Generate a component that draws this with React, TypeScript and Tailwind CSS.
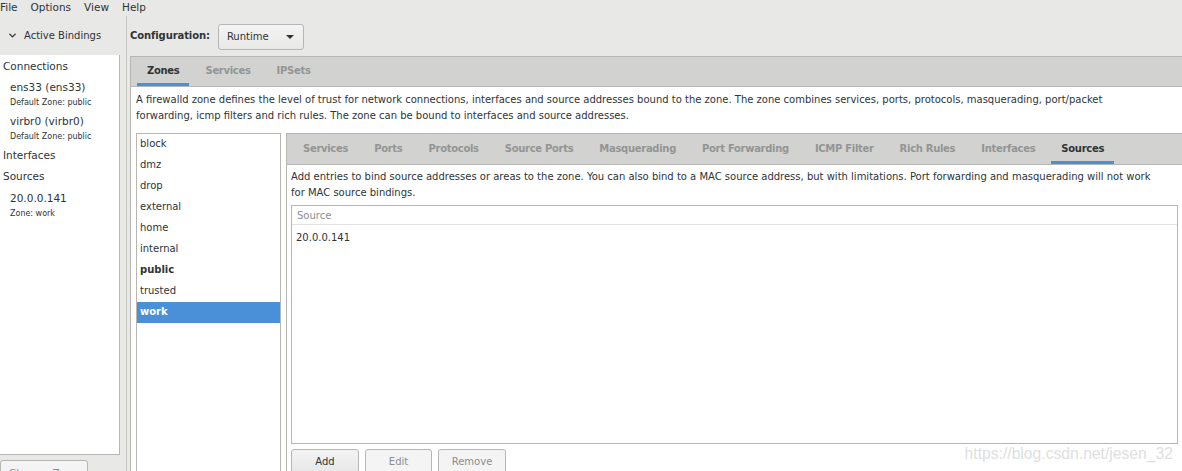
import { ChevronDown } from "lucide-react";

const zones = ["block", "dmz", "drop", "external", "home", "internal", "public", "trusted", "work"];
const zoneTabs = [
  "Services",
  "Ports",
  "Protocols",
  "Source Ports",
  "Masquerading",
  "Port Forwarding",
  "ICMP Filter",
  "Rich Rules",
  "Interfaces",
  "Sources",
];

function Tab({ label, active }: { label: string; active?: boolean }) {
  return (
    <div
      className={
        "flex h-full items-center border-b-[3px] px-[10px] pt-[2px] font-bold tracking-[-0.3px] " +
        (active ? "border-[#4a90d9] text-[#2e3436]" : "border-transparent text-[#929595]")
      }
    >
      {label}
    </div>
  );
}

function Button({ label, disabled, w }: { label: string; disabled?: boolean; w: string }) {
  return (
    <div
      className={
        "flex h-[26px] shrink-0 items-center justify-center rounded-[3px] border border-[#b6b6b3] " +
        w +
        " " +
        (disabled ? "bg-[#f4f4f4] text-[#8b8e8f]" : "bg-gradient-to-b from-[#f4f4f4] to-[#e6e6e6] text-[#2e3436]")
      }
    >
      {label}
    </div>
  );
}

function Binding({ name, zone, pt }: { name: string; zone: string; pt: string }) {
  return (
    <div className={"pl-[10px] " + pt}>
      <div className="leading-[14px]">{name}</div>
      <div className="pt-[2px] text-[8px] leading-[14px]">{zone}</div>
    </div>
  );
}

export default function App() {
  return (
    <div className="relative flex h-[471px] w-[1182px] flex-col overflow-hidden bg-[#e8e8e7] font-['DejaVu_Sans',sans-serif] text-[10px] leading-[16px] text-[#2e3436]">
      {/* menu bar */}
      <div className="flex h-[16px] shrink-0 items-center gap-[13px] pb-[2px] text-[10.5px]">
        <span>File</span>
        <span>Options</span>
        <span>View</span>
        <span>Help</span>
      </div>

      <div className="flex min-h-0 flex-1">
        {/* active bindings sidebar */}
        <div className="flex w-[120px] shrink-0 flex-col">
          <div className="flex h-[39px] shrink-0 items-center gap-[6px] pl-[7px] text-[10px] text-[#2e3436]">
            <ChevronDown size={11} strokeWidth={3} />
            <span>Active Bindings</span>
          </div>
          <div className="flex h-[400px] shrink-0 flex-col border-r border-b border-[#b6b6b3] bg-white pt-[2px] text-[10.5px]">
            <div className="pl-[3px] leading-[18px]">Connections</div>
            <Binding name="ens33 (ens33)" zone="Default Zone: public" pt="pt-[5px]" />
            <Binding name="virbr0 (virbr0)" zone="Default Zone: public" pt="pt-[4px]" />
            <div className="pl-[3px] pt-[2px] leading-[18px]">Interfaces</div>
            <div className="pl-[3px] pt-[3px] leading-[18px]">Sources</div>
            <Binding name="20.0.0.141" zone="Zone: work" pt="pt-[6px]" />
          </div>
          <div className="mt-[5px] flex h-[26px] w-[88px] shrink-0 items-center justify-center rounded-[3px] border border-[#b6b6b3] bg-[#f4f4f4] text-[10.5px] text-[#8b8e8f]">
            Change Zone
          </div>
        </div>

        {/* pane handle */}
        <div className="flex w-[10px] shrink-0 justify-center pl-[3px]">
          <div className="h-full w-[1px] bg-[#c6c6c4]" />
        </div>

        {/* main area */}
        <div className="flex min-w-0 flex-1 flex-col">
          <div className="flex h-[40px] shrink-0 items-center gap-[8px]">
            <span className="font-bold tracking-[-0.1px]">Configuration:</span>
            <div className="mt-[1px] flex h-[26px] w-[86px] items-center justify-between rounded-[3px] border border-[#b6b6b3] bg-gradient-to-b from-[#f4f4f4] to-[#e8e8e7] pl-[8px] pr-[9px]">
              <span>Runtime</span>
              <svg width="8" height="4" viewBox="0 0 8 4">
                <path d="M0 0h8L4 4z" fill="#2e3436" />
              </svg>
            </div>
          </div>

          {/* outer notebook */}
          <div className="flex min-h-0 flex-1 flex-col border-t border-l border-[#b6b6b3]">
            <div className="flex h-[29px] shrink-0 gap-[6px] bg-[#d2d2d0] pl-[6px]">
              <Tab label="Zones" active />
              <Tab label="Services" />
              <Tab label="IPSets" />
            </div>
            <div className="flex min-h-0 flex-1 flex-col border-t border-[#b6b6b3] bg-white pl-[5px]">
              <p className="pt-[5px] pr-[40px]">
                A firewalld zone defines the level of trust for network connections, interfaces and source addresses
                bound to the zone. The zone combines services, ports, protocols, masquerading, port/packet forwarding,
                icmp filters and rich rules. The zone can be bound to interfaces and source addresses.
              </p>

              <div className="mt-[9px] flex min-h-0 flex-1 gap-[5px]">
                {/* zone list */}
                <div className="flex w-[145px] shrink-0 flex-col border-t border-r border-l border-[#b6b6b3] bg-white">
                  {zones.map((z) => (
                    <div
                      key={z}
                      className={
                        "h-[21px] pl-[3px] leading-[19px] " +
                        (z === "work" ? "bg-[#4a90d9] font-bold text-white" : z === "public" ? "font-bold" : "")
                      }
                    >
                      {z}
                    </div>
                  ))}
                </div>

                {/* zone notebook */}
                <div className="flex min-w-0 flex-1 flex-col border-t border-l border-[#b6b6b3]">
                  <div className="flex h-[30px] shrink-0 gap-[6px] bg-[#d2d2d0] pl-[6px]">
                    {zoneTabs.map((t) => (
                      <Tab key={t} label={t} active={t === "Sources"} />
                    ))}
                  </div>
                  <div className="flex min-h-0 flex-1 flex-col border-t border-[#b6b6b3] bg-white pl-[4px] pr-[4px]">
                    <p className="pt-[4px] pr-[20px]">
                      Add entries to bind source addresses or areas to the zone. You can also bind to a MAC source
                      address, but with limitations. Port forwarding and masquerading will not work for MAC source
                      bindings.
                    </p>
                    <div className="mt-[4px] flex h-[239px] shrink-0 flex-col border border-[#b6b6b3] bg-white">
                      <div className="h-[19px] shrink-0 border-b border-[#e2e2e2] pl-[5px] pt-[2px] leading-[15px] text-[#8b8e8f]">
                        Source
                      </div>
                      <div className="pl-[4px] pt-[5px]">20.0.0.141</div>
                    </div>
                    <div className="mt-[5px] flex gap-[6px]">
                      <Button label="Add" w="w-[68px]" />
                      <Button label="Edit" w="w-[67px]" disabled />
                      <Button label="Remove" w="w-[68px]" disabled />
                    </div>
                  </div>
                </div>
              </div>
            </div>
          </div>
        </div>
      </div>

      <div className="absolute right-[9px] bottom-[8px] font-['Liberation_Sans',sans-serif] text-[15.7px] leading-[18px] text-[#e0e0e0]">
        https://blog.csdn.net/jesen_32
      </div>
    </div>
  );
}
